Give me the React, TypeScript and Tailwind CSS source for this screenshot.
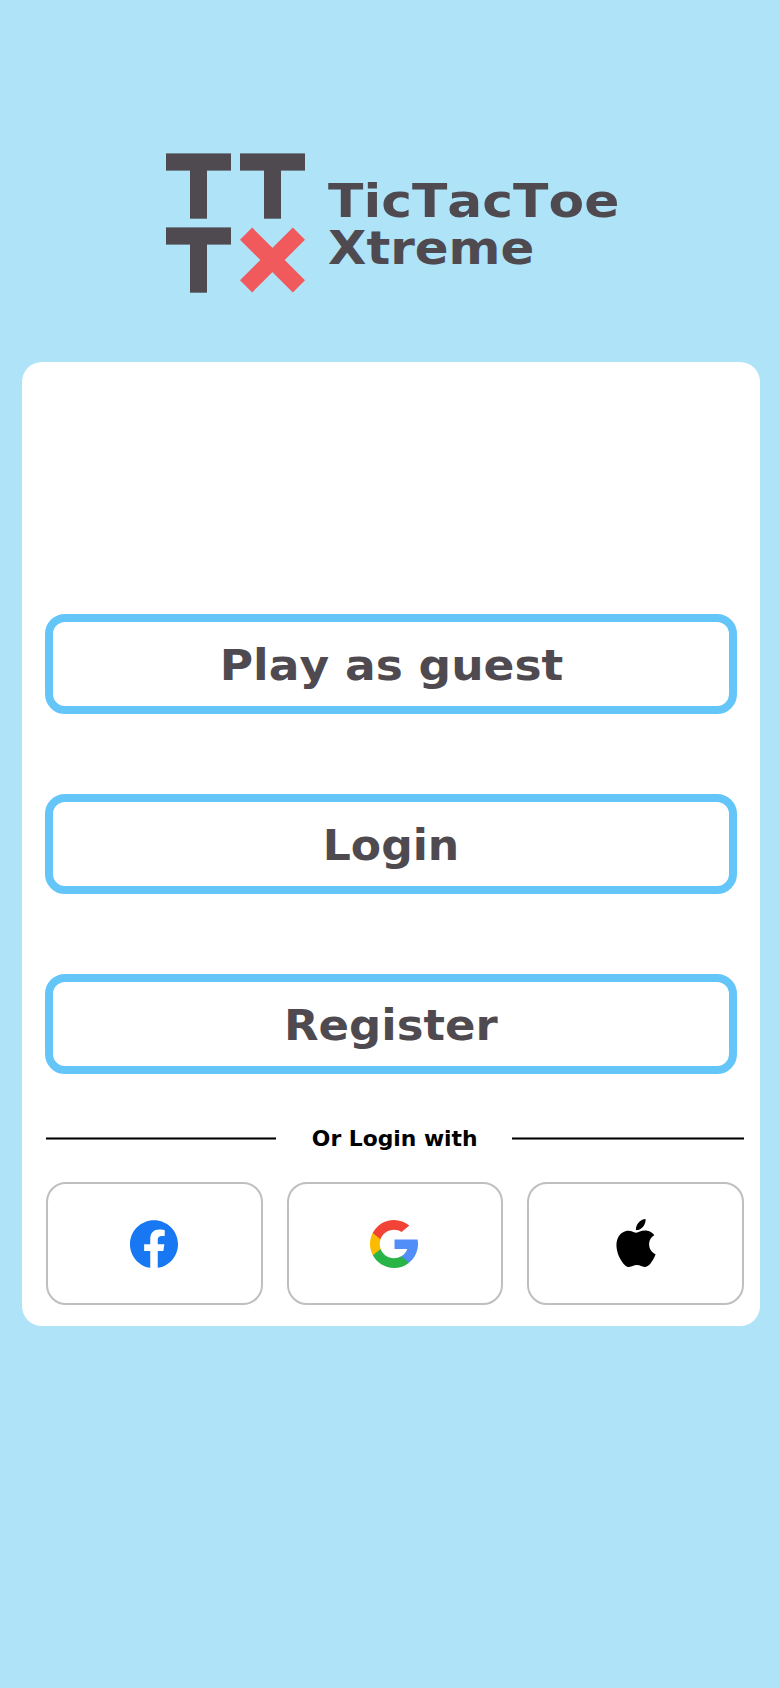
import type { ReactNode } from 'react';

function LogoMark() {
  return (
    <svg className="h-[140px] w-[139px] shrink-0" viewBox="0 0 139 140" aria-hidden="true">
      <g fill="#4e4a50">
        <rect x="0" y="0.4" width="65" height="17.2" />
        <rect x="24" y="10" width="17" height="55.7" />
        <rect x="74" y="0.4" width="65" height="17.2" />
        <rect x="98" y="10" width="17" height="55.7" />
        <rect x="0" y="74.4" width="65" height="17.2" />
        <rect x="24" y="84" width="17" height="55.7" />
      </g>
      <g stroke="#f05a5d" strokeWidth="17.2">
        <line x1="80.1" y1="80.7" x2="132.9" y2="133.3" />
        <line x1="132.9" y1="80.7" x2="80.1" y2="133.3" />
      </g>
    </svg>
  );
}

function FacebookIcon() {
  return (
    <svg className="size-12" viewBox="0 0 24 24" aria-label="Facebook">
      <path
        fill="#1877f2"
        d="M24 12.073c0-6.627-5.373-12-12-12s-12 5.373-12 12c0 5.99 4.388 10.954 10.125 11.854v-8.385H7.078v-3.47h3.047V9.43c0-3.007 1.792-4.669 4.533-4.669 1.312 0 2.686.235 2.686.235v2.953H15.83c-1.491 0-1.956.925-1.956 1.874v2.25h3.328l-.532 3.47h-2.796v8.385C19.612 23.027 24 18.062 24 12.073z"
      />
    </svg>
  );
}

function GoogleIcon() {
  return (
    <svg className="mt-px mr-[2px] size-12" viewBox="0 0 512 512" aria-label="Google">
      <path
        fill="#fbbb00"
        d="M113.47,309.408L95.648,375.94l-65.139,1.378C11.042,341.211,0,299.9,0,256c0-42.451,10.324-82.483,28.624-117.732h0.014l57.992,10.632l25.404,57.644c-5.317,15.501-8.215,32.141-8.215,49.456C103.821,274.792,107.225,292.797,113.47,309.408z"
      />
      <path
        fill="#518ef8"
        d="M507.527,208.176C510.467,223.662,512,239.655,512,256c0,18.328-1.927,36.206-5.598,53.451c-12.462,58.683-45.025,109.925-90.134,146.187l-0.014-0.014l-73.044-3.727l-10.338-64.535c29.932-17.554,53.324-45.025,65.646-77.911h-136.89V208.176h138.887L507.527,208.176z"
      />
      <path
        fill="#28b446"
        d="M416.253,455.624l0.014,0.014C372.396,490.901,316.666,512,256,512c-97.491,0-182.252-54.491-225.491-134.681l82.961-67.91c21.619,57.698,77.278,98.771,142.53,98.771c28.047,0,54.323-7.582,76.87-20.818L416.253,455.624z"
      />
      <path
        fill="#f14336"
        d="M419.404,58.936l-82.933,67.896c-23.335-14.586-50.919-23.012-80.471-23.012c-66.729,0-123.429,42.957-143.965,102.724l-83.397-68.276h-0.014C71.23,56.123,157.06,0,256,0C318.115,0,375.068,22.126,419.404,58.936z"
      />
    </svg>
  );
}

function AppleIcon() {
  return (
    <svg className="mb-[2px] size-12" viewBox="0 0 24 24" aria-label="Apple">
      <path d="M12.152 6.896c-.948 0-2.415-1.078-3.96-1.04-2.04.027-3.91 1.183-4.961 3.014-2.117 3.675-.546 9.103 1.519 12.09 1.013 1.454 2.208 3.09 3.792 3.039 1.52-.065 2.09-.987 3.935-.987 1.831 0 2.35.987 3.96.948 1.637-.026 2.676-1.48 3.676-2.948 1.156-1.688 1.636-3.325 1.662-3.415-.039-.013-3.182-1.221-3.22-4.857-.026-3.04 2.48-4.494 2.597-4.559-1.429-2.09-3.623-2.324-4.39-2.376-2-.156-3.675 1.09-4.61 1.09zM15.53 3.83c.843-1.012 1.4-2.427 1.245-3.83-1.207.052-2.662.805-3.532 1.818-.78.896-1.454 2.338-1.273 3.714 1.338.104 2.715-.688 3.559-1.701" />
    </svg>
  );
}

function MenuButton({ label, stretch }: { label: string; stretch: string }) {
  return (
    <button className="-ml-[0.7px] flex h-[100px] w-[691.7px] items-center justify-center rounded-[20px] border-8 border-[#64c6f8] bg-white pt-[3px] text-[42px] leading-[50px] font-bold text-[#4e4a50]">
      <span className={`inline-block whitespace-nowrap ${stretch}`}>{label}</span>
    </button>
  );
}

function SocialButton({ children }: { children: ReactNode }) {
  return (
    <button className="flex h-[123px] items-center justify-center rounded-[20px] border-2 border-[#bfbfbf] bg-white">
      {children}
    </button>
  );
}

export default function App() {
  return (
    <main className="flex h-[1688px] w-[780px] flex-col bg-[#afe3f8] pt-[153px] font-['DejaVu_Sans',sans-serif] [font-kerning:none]">
      <header className="ml-[166px] flex h-[209px] items-start">
        <LogoMark />
        <h1 className="mt-[25px] ml-[23px] flex flex-col items-start text-[46px] leading-[47px] font-bold text-[#4e4a50]">
          <span className="inline-block origin-left scale-x-[1.128]">TicTacToe</span>
          <span className="inline-block origin-left scale-x-[1.083]">Xtreme</span>
        </h1>
      </header>

      <section className="ml-[22px] flex h-[964px] w-[738px] flex-col rounded-[20px] bg-white pt-[252px] pr-4 pl-6">
        <div className="flex flex-col gap-20">
          <MenuButton label="Play as guest" stretch="scale-x-[1.084]" />
          <MenuButton label="Login" stretch="scale-x-[1.05]" />
          <MenuButton label="Register" stretch="scale-x-[1.07]" />
        </div>

        <div className="mt-[50px] flex h-[29px] items-center justify-between">
          <span className="h-[3px] w-[229.5px] border-y border-[#777] bg-black" />
          <span className="mt-[2px] ml-[2px] inline-block scale-x-[1.04] text-[21px] leading-[29px] font-bold whitespace-nowrap text-black">
            Or Login with
          </span>
          <span className="h-[3px] w-[232px] border-y border-[#777] bg-black" />
        </div>

        <div className="mt-[29px] grid grid-cols-3 gap-6">
          <SocialButton>
            <FacebookIcon />
          </SocialButton>
          <SocialButton>
            <GoogleIcon />
          </SocialButton>
          <SocialButton>
            <AppleIcon />
          </SocialButton>
        </div>
      </section>
    </main>
  );
}
